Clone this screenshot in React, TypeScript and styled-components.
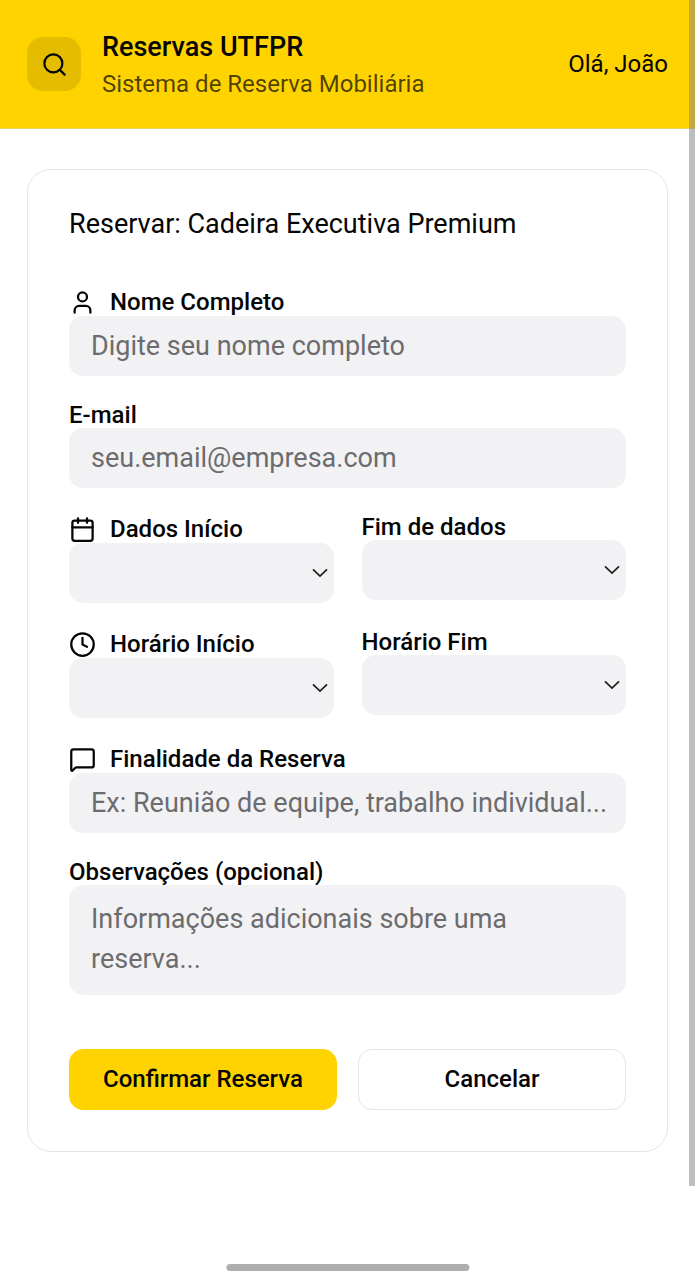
import React from "react";
import styled, { createGlobalStyle, css } from "styled-components";
import { Calendar, Clock, MessageSquare, Search, User } from "lucide-react";

const GlobalStyle = createGlobalStyle`
  *, *::before, *::after { box-sizing: border-box; }
  body {
    margin: 0;
    background: #ffffff;
    color: #050505;
    font-family: Roboto, "Liberation Sans", sans-serif;
  }
`;

const Header = styled.header`
  display: flex;
  align-items: center;
  justify-content: space-between;
  gap: 21px;
  padding: 27px;
  background: #ffd300;
  border-bottom: 1px solid #ecd264;
`;

const Brand = styled.div`
  display: flex;
  align-items: center;
  gap: 21px;
`;

const SearchButton = styled.button`
  display: grid;
  place-items: center;
  flex: none;
  width: 54px;
  height: 54px;
  padding: 0;
  border: 0;
  border-radius: 16px;
  background: rgba(0, 0, 0, 0.1);
  color: #050505;
`;

const BrandName = styled.h1`
  margin: 0;
  font-size: 27px;
  font-weight: 500;
  line-height: 40px;
`;

const Tagline = styled.p`
  margin: 0;
  font-size: 24px;
  line-height: 34px;
  color: rgba(0, 0, 0, 0.7);
`;

const Greeting = styled.span`
  font-size: 24px;
  line-height: 34px;
  white-space: nowrap;
`;

const Main = styled.main`
  padding: 40px 27px 128px;
`;

const Card = styled.section`
  padding: 41px;
  border: 1px solid #e5e5e5;
  border-radius: 24px;
  background: #ffffff;
`;

const CardTitle = styled.h2`
  margin: 0 0 51px;
  font-size: 27px;
  font-weight: 400;
  line-height: 27px;
`;

const Form = styled.form`
  display: flex;
  flex-direction: column;
  gap: 28px;
`;

const FieldRow = styled.div`
  display: grid;
  grid-template-columns: 1fr 1fr;
  align-items: start;
  gap: 28px;
`;

const FieldBox = styled.div`
  display: flex;
  flex-direction: column;
  min-width: 0;
`;

const Label = styled.label`
  display: flex;
  align-items: center;
  gap: 14px;
  font-size: 24px;
  font-weight: 500;
  line-height: 22px;
  white-space: nowrap;
`;

const LabelText = styled.span`
  padding-bottom: 2px;
`;

const control = css`
  display: block;
  width: 100%;
  margin: 0;
  border: 0;
  border-radius: 14px;
  background: #f2f2f5;
  color: #050505;
  font-family: inherit;
  font-size: 27px;

  &::placeholder {
    color: #6c6c6e;
    opacity: 1;
  }
`;

const TextInput = styled.input`
  ${control}
  height: 60px;
  padding: 0 16px 0 22px;
`;

const TextArea = styled.textarea`
  ${control}
  height: 110px;
  padding: 14px 22px;
  line-height: 40px;
  resize: none;
  overflow: hidden;
`;

const SelectWrap = styled.div`
  position: relative;
`;

const Select = styled.select`
  ${control}
  height: 60px;
  padding: 0 36px 0 22px;
  appearance: none;
`;

const Arrow = styled.svg`
  position: absolute;
  top: 50%;
  right: 6px;
  transform: translateY(-50%);
  pointer-events: none;
`;

const Actions = styled.div`
  display: flex;
  gap: 21px;
  padding-top: 26px;
`;

const Button = styled.button<{ $primary?: boolean }>`
  flex: 1 1 0;
  height: 61px;
  padding: 0 14px 2px;
  border: 1px solid ${(p) => (p.$primary ? "#ffd300" : "#e5e5e5")};
  border-radius: 14px;
  background: ${(p) => (p.$primary ? "#ffd300" : "#ffffff")};
  color: #050505;
  font-family: inherit;
  font-size: 24px;
  font-weight: 500;
`;

const ScrollThumb = styled.div`
  position: fixed;
  top: 0;
  right: 0;
  bottom: 94px;
  width: 6px;
  background: rgba(128, 128, 128, 0.5);
`;

const HomeIndicator = styled.div`
  position: fixed;
  bottom: 9px;
  left: 50%;
  width: 35%;
  height: 7px;
  border-radius: 4px;
  background: #aeaeae;
  transform: translateX(-50%);
`;

type FieldProps = {
  id: string;
  label: string;
  icon?: React.ReactNode;
  children: React.ReactNode;
};

function Field({ id, label, icon, children }: FieldProps) {
  return (
    <FieldBox>
      <Label htmlFor={id}>
        {icon}
        <LabelText>{label}</LabelText>
      </Label>
      {children}
    </FieldBox>
  );
}

function SelectField({ id, label, icon }: Omit<FieldProps, "children">) {
  return (
    <Field id={id} label={label} icon={icon}>
      <SelectWrap>
        <Select id={id} defaultValue="">
          <option value="" />
        </Select>
        <Arrow width="16" height="10" viewBox="0 0 16 10" fill="none" stroke="#1c1c1c" strokeWidth="1.7" aria-hidden="true">
          <path d="M1 1.400 8 8l7-6.600" />
        </Arrow>
      </SelectWrap>
    </Field>
  );
}

export default function App() {
  return (
    <>
      <GlobalStyle />
      <Header>
        <Brand>
          <SearchButton type="button" aria-label="Buscar">
            <Search size={27} />
          </SearchButton>
          <div>
            <BrandName>Reservas UTFPR</BrandName>
            <Tagline>Sistema de Reserva Mobiliária</Tagline>
          </div>
        </Brand>
        <Greeting>Olá, João</Greeting>
      </Header>
      <Main>
        <Card>
          <CardTitle>Reservar: Cadeira Executiva Premium</CardTitle>
          <Form onSubmit={(e) => e.preventDefault()}>
            <Field id="nome" label="Nome Completo" icon={<User size={27} />}>
              <TextInput id="nome" type="text" placeholder="Digite seu nome completo" />
            </Field>
            <Field id="email" label="E-mail">
              <TextInput id="email" type="email" placeholder="seu.email@empresa.com" />
            </Field>
            <FieldRow>
              <SelectField id="data-inicio" label="Dados Início" icon={<Calendar size={27} />} />
              <SelectField id="data-fim" label="Fim de dados" />
            </FieldRow>
            <FieldRow>
              <SelectField id="hora-inicio" label="Horário Início" icon={<Clock size={27} />} />
              <SelectField id="hora-fim" label="Horário Fim" />
            </FieldRow>
            <Field id="finalidade" label="Finalidade da Reserva" icon={<MessageSquare size={27} />}>
              <TextInput id="finalidade" type="text" placeholder="Ex: Reunião de equipe, trabalho individual..." />
            </Field>
            <Field id="observacoes" label="Observações (opcional)">
              <TextArea id="observacoes" placeholder="Informações adicionais sobre uma reserva..." />
            </Field>
            <Actions>
              <Button type="submit" $primary>
                Confirmar Reserva
              </Button>
              <Button type="button">Cancelar</Button>
            </Actions>
          </Form>
        </Card>
      </Main>
      <ScrollThumb />
      <HomeIndicator />
    </>
  );
}
